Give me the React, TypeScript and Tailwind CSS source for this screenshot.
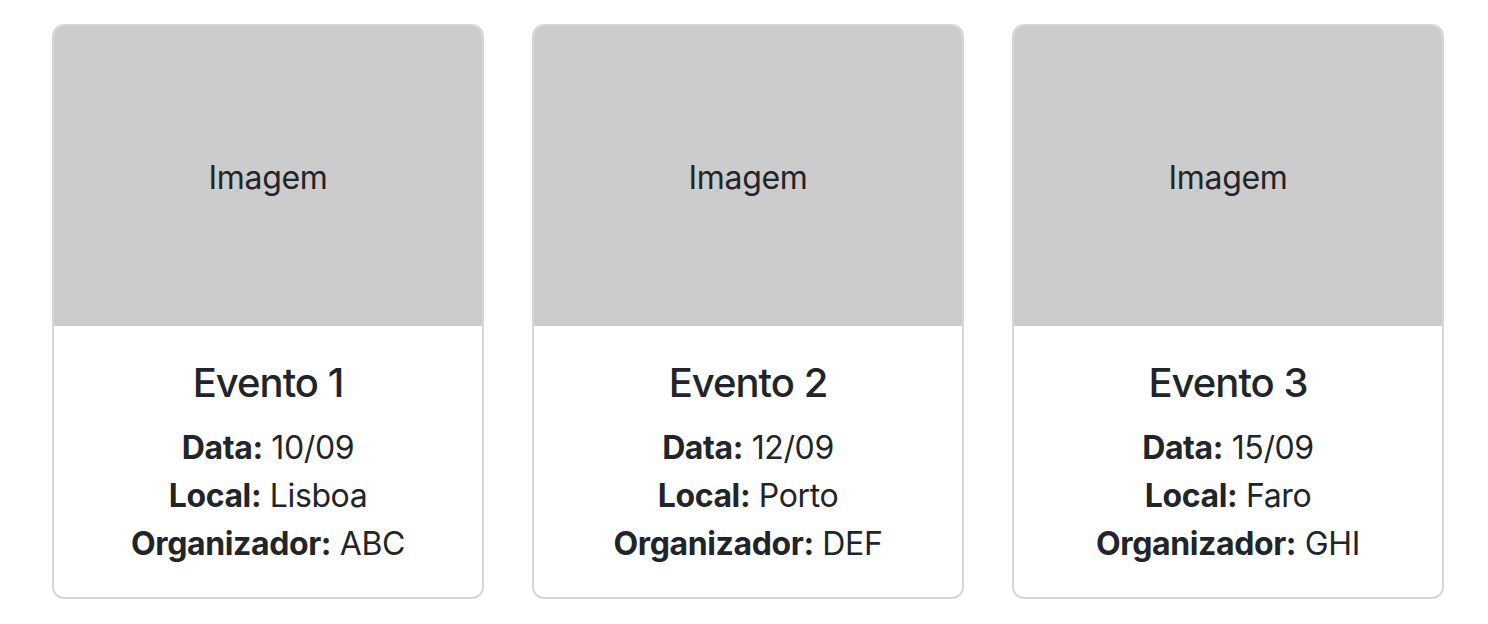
import React from 'react';

interface Evento {
  id: number;
  titulo: string;
  data: string;
  local: string;
  organizador: string;
}

const eventos: Evento[] = [
  { id: 1, titulo: 'Evento 1', data: '10/09', local: 'Lisboa', organizador: 'ABC' },
  { id: 2, titulo: 'Evento 2', data: '12/09', local: 'Porto', organizador: 'DEF' },
  { id: 3, titulo: 'Evento 3', data: '15/09', local: 'Faro', organizador: 'GHI' },
];

const CartaoEvento: React.FC<{ evento: Evento }> = ({ evento }) => (
  <div className="w-[432px] overflow-hidden rounded-[12px] border-2 border-[#d6d6d6] bg-white">
    {/* Espaço reservado para a imagem */}
    <div className="-mx-[2px] -mt-[2px] flex h-[302px] items-center justify-center bg-[#cccccc] pt-[6px] text-[32px] leading-[48px] tracking-[-0.01em]">
      Imagem
    </div>
    <div className="px-[32px] pb-[29px] pt-[33px] text-center">
      <h5 className="mb-[17px] text-[40px] font-medium leading-[48px] tracking-[-0.025em]">{evento.titulo}</h5>
      <p className="text-[32px] leading-[48px] tracking-[-0.012em]">
        <strong className="font-bold">Data:</strong> {evento.data}
        <br />
        <strong className="font-bold">Local:</strong> {evento.local}
        <br />
        <strong className="font-bold">Organizador:</strong> {evento.organizador}
      </p>
    </div>
  </div>
);

export default function App() {
  return (
    <div className="min-h-[624px] bg-white pl-[52px] pt-[24px] font-['Inter',sans-serif] text-[#212529]">
      <div className="flex gap-[48px]">
        {eventos.map((evento) => (
          <CartaoEvento key={evento.id} evento={evento} />
        ))}
      </div>
    </div>
  );
}
